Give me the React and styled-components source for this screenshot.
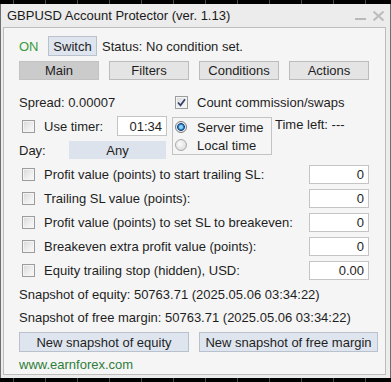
import React from "react";
import styled, { createGlobalStyle } from "styled-components";

const GlobalStyle = createGlobalStyle`
  html, body { margin: 0; padding: 0; background: #000; }
  body {
    font-family: "Liberation Sans", Arial, sans-serif;
    font-size: 13px;
    color: #1e1e1e;
  }
  * { box-sizing: border-box; }
`;

const Stage = styled.div`
  width: 391px;
  height: 382px;
  padding-top: 4px;
  overflow: hidden;
  background:
    repeating-linear-gradient(90deg, transparent 0 13px, #4a4a4a 13px 14px, transparent 14px 32px),
    #000;
`;

const Window = styled.div`
  width: 391px;
  height: 374px;
  background: #ececec;
  border-left: 1px solid #6f6f6f;
  border-right: 1px solid #6f6f6f;
  padding: 0 4px 3px 2px;
  display: flex;
  flex-direction: column;
`;

const TitleBar = styled.div`
  height: 24px;
  display: flex;
  align-items: center;
  padding-left: 4px;
  color: #1a1a1a;
`;

const TitleText = styled.span`
  flex: 1;
`;

const TitleIcons = styled.div`
  display: flex;
  align-items: center;
  gap: 6px;
  margin-right: 1px;
`;

const Panel = styled.div`
  flex: 1;
  border: 1px solid #bdbdbd;
  background: #f5f5f5;
  padding: 8px 0 0 15px;
  display: flex;
  flex-direction: column;
`;

const Row = styled.div`
  display: flex;
  align-items: center;
  height: ${(p) => p.$h || 20}px;
  margin-top: ${(p) => p.$mt || 0}px;
  width: ${(p) => (p.$w ? `${p.$w}px` : "auto")};
  white-space: nowrap;
`;

const OnLabel = styled.span`
  width: 29px;
  color: #3a9a3a;
`;

const Button = styled.div`
  width: ${(p) => p.$w}px;
  height: ${(p) => p.$h || 20}px;
  flex-shrink: 0;
  display: flex;
  align-items: center;
  justify-content: center;
  background: ${(p) => (p.$flat ? "#dde3ec" : "#dfe5ee")};
  border: 1px solid ${(p) => (p.$flat ? "#dde3ec" : "#b9c1cd")};
  color: #1e1e1e;
`;

const StatusText = styled.span`
  margin-left: 5px;
`;

const Tabs = styled.div`
  display: flex;
  gap: 10px;
  margin-top: 5px;
`;

const Tab = styled.div`
  width: 80px;
  height: 19px;
  display: flex;
  align-items: center;
  justify-content: center;
  background: ${(p) => (p.$active ? "#cbcbcb" : "#e4e4e4")};
  border: 1px solid ${(p) => (p.$active ? "#c2c2c2" : "#bcbcbc")};
`;

const SpreadText = styled.span`
  width: 156px;
`;

const BoxWrap = styled.span`
  margin-left: ${(p) => p.$ml || 0}px;
  width: 13px;
  height: 13px;
  flex-shrink: 0;
  border: 1px solid #9c9c9c;
  background: linear-gradient(135deg, #d6d6d6 0%, #eeeeee 55%, #fafafa 100%);
  box-shadow: inset 0 0 0 1px #f4f4f4;
  display: flex;
  align-items: center;
  justify-content: center;
`;

const CheckLabel = styled.span`
  margin-left: 9px;
`;

const Checkbox = ({ checked, ml }) => (
  <BoxWrap $ml={ml}>
    {checked && (
      <svg width="11" height="11" viewBox="0 0 11 11">
        <path d="M2 5.5 L4.5 8.3 L9 2.3" fill="none" stroke="#34406a" strokeWidth="1.7" />
      </svg>
    )}
  </BoxWrap>
);

const Middle = styled.div`
  display: flex;
  margin-top: 4px;
`;

const LeftCol = styled.div`
  width: 148px;
  display: flex;
  flex-direction: column;
`;

const Input = styled.div`
  width: ${(p) => p.$w}px;
  height: ${(p) => p.$h || 20}px;
  margin-left: auto;
  flex-shrink: 0;
  background: #fff;
  border: 1px solid #c4c4c4;
  display: flex;
  align-items: center;
  justify-content: flex-end;
  padding-right: 4px;
`;

const DayLabel = styled.span`
  width: 50px;
`;

const RadioBox = styled.div`
  width: 100px;
  height: 38px;
  margin-left: 5px;
  margin-top: 1px;
  border: 1px solid #c3c3c3;
  padding-left: 2px;
  display: flex;
  flex-direction: column;
`;

const RadioRow = styled.div`
  height: 18px;
  display: flex;
  align-items: center;
  white-space: nowrap;
`;

const RadioCircle = styled.span`
  width: 12px;
  height: 12px;
  border-radius: 50%;
  flex-shrink: 0;
  border: 1px solid ${(p) => (p.$on ? "#7c7c7c" : "#a9a9a9")};
  background: ${(p) =>
    p.$on
      ? "radial-gradient(circle at 50% 50%, #8fd0f5 0 1.5px, #2a7fc4 2.5px, #1b4f86 3.6px, #e6e6e6 4.2px, #f6f6f6 100%)"
      : "radial-gradient(circle at 40% 40%, #fbfbfb 0%, #e4e4e4 60%, #d2d2d2 100%)"};
`;

const RadioLabel = styled.span`
  margin-left: 10px;
`;

const TimeLeft = styled.span`
  margin-left: 3px;
  height: 18px;
  line-height: 18px;
  white-space: nowrap;
`;

const List = styled.div`
  display: flex;
  flex-direction: column;
  margin-top: 3px;
`;

const BottomButtons = styled.div`
  display: flex;
  gap: 10px;
  margin-top: 3px;
`;

const Link = styled.div`
  margin-top: 2px;
  height: 20px;
  display: flex;
  align-items: center;
  color: #2f7d3a;
`;

const settings = [
  ["Profit value (points) to start trailing SL:", "0"],
  ["Trailing SL value (points):", "0"],
  ["Profit value (points) to set SL to breakeven:", "0"],
  ["Breakeven extra profit value (points):", "0"],
  ["Equity trailing stop (hidden), USD:", "0.00"],
];

export default function App() {
  return (
    <>
      <GlobalStyle />
      <Stage>
        <Window>
          <TitleBar>
            <TitleText>GBPUSD Account Protector (ver. 1.13)</TitleText>
            <TitleIcons>
              <svg width="11" height="12" viewBox="0 0 11 12">
                <rect x="0" y="8" width="11" height="2" fill="#b9b9b9" />
              </svg>
              <svg width="13" height="12" viewBox="0 0 13 12">
                <path d="M1.5 1.5 L11.5 10.5 M11.5 1.5 L1.5 10.5" stroke="#bdbdbd" strokeWidth="2.2" />
              </svg>
            </TitleIcons>
          </TitleBar>
          <Panel>
            <Row>
              <OnLabel>ON</OnLabel>
              <Button $w={49}>Switch</Button>
              <StatusText>Status: No condition set.</StatusText>
            </Row>
            <Tabs>
              <Tab $active>Main</Tab>
              <Tab>Filters</Tab>
              <Tab>Conditions</Tab>
              <Tab>Actions</Tab>
            </Tabs>
            <Row $mt={12}>
              <SpreadText>Spread: 0.00007</SpreadText>
              <Checkbox checked />
              <CheckLabel>Count commission/swaps</CheckLabel>
            </Row>
            <Middle>
              <LeftCol>
                <Row>
                  <Checkbox ml={3} />
                  <CheckLabel>Use timer:</CheckLabel>
                  <Input $w={50}>01:34</Input>
                </Row>
                <Row $mt={5} $h={18}>
                  <DayLabel>Day:</DayLabel>
                  <Button $w={97} $h={18} $flat>Any</Button>
                </Row>
              </LeftCol>
              <RadioBox>
                <RadioRow>
                  <RadioCircle $on />
                  <RadioLabel>Server time</RadioLabel>
                </RadioRow>
                <RadioRow>
                  <RadioCircle />
                  <RadioLabel>Local time</RadioLabel>
                </RadioRow>
              </RadioBox>
              <TimeLeft>Time left: ---</TimeLeft>
            </Middle>
            <List>
              {settings.map(([label, value]) => (
                <Row key={label} $h={24} $w={350}>
                  <Checkbox ml={3} />
                  <CheckLabel>{label}</CheckLabel>
                  <Input $w={60} $h={19}>{value}</Input>
                </Row>
              ))}
            </List>
            <Row $h={24}>Snapshot of equity: 50763.71 (2025.05.06 03:34:22)</Row>
            <Row $h={23}>Snapshot of free margin: 50763.71 (2025.05.06 03:34:22)</Row>
            <BottomButtons>
              <Button $w={170}>New snapshot of equity</Button>
              <Button $w={179}>New snapshot of free margin</Button>
            </BottomButtons>
            <Link>www.earnforex.com</Link>
          </Panel>
        </Window>
      </Stage>
    </>
  );
}
